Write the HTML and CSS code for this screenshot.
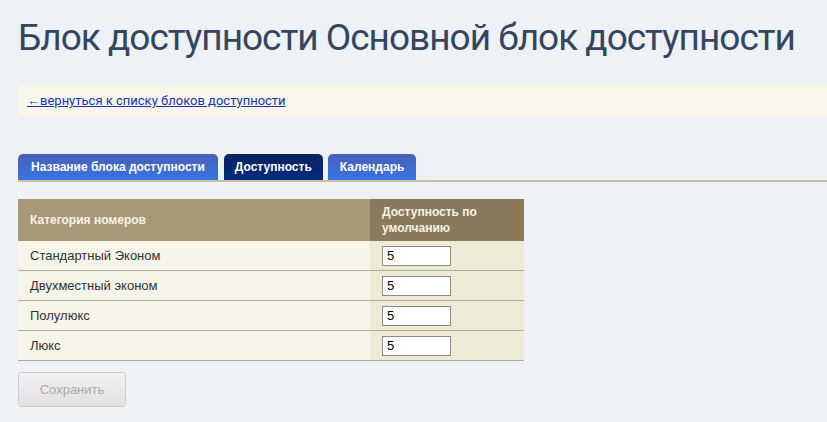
FILE: index.html
```html
<!DOCTYPE html>
<html>

<head>
    <link rel="stylesheet" href="styles.css">
</head>

<body>
    <div id="page">
        <h1 class="title">Блок доступности Основной блок доступности</h1>

        <div class="notice">
            <a href="#">&larr;вернуться к списку блоков доступности</a>
        </div>

        <div class="tabs">
            <a class="tab" href="#">Название блока доступности</a>
            <a class="tab active" href="#">Доступность</a>
            <a class="tab" href="#">Календарь</a>
        </div>

        <table class="grid">
            <tr>
                <th class="name">Категория номеров</th>
                <th class="value">Доступность по умолчанию</th>
            </tr>
            <tr>
                <td class="name">Стандартный Эконом</td>
                <td class="value"><input type="text" value="5" /></td>
            </tr>
            <tr>
                <td class="name">Двухместный эконом</td>
                <td class="value"><input type="text" value="5" /></td>
            </tr>
            <tr>
                <td class="name">Полулюкс</td>
                <td class="value"><input type="text" value="5" /></td>
            </tr>
            <tr>
                <td class="name">Люкс</td>
                <td class="value"><input type="text" value="5" /></td>
            </tr>
        </table>

        <button class="save" disabled>Сохранить</button>
    </div>
</body>

</html>
```

FILE: styles.css
```css
body {
    margin: 0;
    background-color: #eef1f5;
    font-family: "Liberation Sans", Arial, sans-serif;
    font-size: 13px;
    color: #333333;
}

#page {
    padding: 14px 0 0 18px;
}

.title {
    margin: 0;
    font-family: Roboto, "Liberation Sans", sans-serif;
    font-weight: normal;
    font-size: 37px;
    letter-spacing: -1px;
    line-height: 48px;
    color: #34465f;
    white-space: nowrap;
}

.notice {
    margin-top: 22px;
    height: 33px;
    box-sizing: border-box;
    padding: 9px 0 0 9px;
    background-color: #f8f6ea;
    font-family: Roboto, "Liberation Sans", sans-serif;
}

.notice a {
    color: #1a33b5;
}

.tabs {
    margin-top: 37px;
    display: flex;
    gap: 6px;
    border-bottom: 2px solid #c9c29a;
}

.tab {
    display: block;
    height: 26px;
    line-height: 26px;
    padding: 0 12px;
    border-radius: 5px 5px 0 0;
    background: linear-gradient(#4a60b6, #3574e2);
    color: #ffffff;
    font-size: 12px;
    font-weight: bold;
    text-decoration: none;
}

.tab:first-child {
    padding: 0 13px;
}

.tab.active {
    padding: 0 11px;
    background: linear-gradient(#0b2460, #002a80);
    margin-right: -1px;
}

.grid {
    margin-top: 17px;
    width: 506px;
    border-collapse: collapse;
}

.grid th {
    height: 42px;
    padding: 0 12px;
    text-align: left;
    color: #f7f3e6;
    font-size: 12px;
    font-weight: bold;
    line-height: 16px;
}

.grid th.name {
    width: 328px;
    background-color: #a89878;
}

.grid th.value {
    background-color: #8a7a5b;
}

.grid td {
    height: 29px;
    padding: 0 12px;
    border-bottom: 1px solid #b2aa98;
}

.grid td.name {
    background-color: #f7f5ea;
}

.grid td.value {
    background-color: #edead6;
}

.grid input {
    width: 69px;
    height: 20px;
    box-sizing: border-box;
    border: 1px solid #8a8a8a;
    padding: 1px 4px;
    font-family: "Liberation Sans", Arial, sans-serif;
    font-size: 13px;
    color: #000000;
    display: block;
}

.save {
    display: block;
    margin-top: 11px;
    width: 108px;
    height: 35px;
    border: 1px solid #cfcfcf;
    border-radius: 3px;
    background: linear-gradient(#f1f1f1, #e2e2e2);
    color: #a8a8a8;
    font-family: "Liberation Sans", Arial, sans-serif;
    font-size: 13px;
}
```
